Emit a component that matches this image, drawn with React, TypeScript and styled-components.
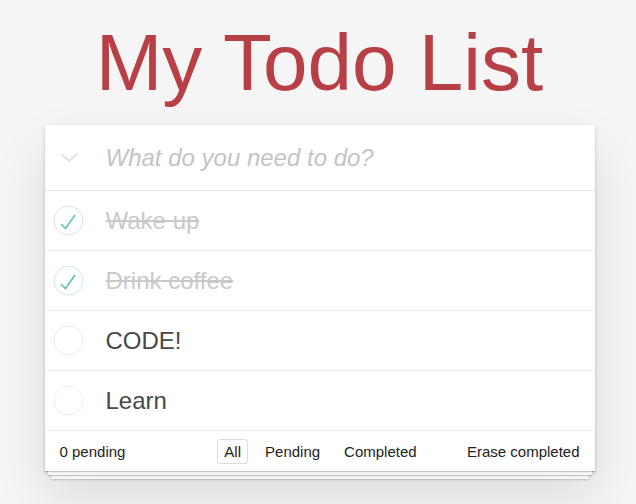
import React from "react";
import styled, { createGlobalStyle } from "styled-components";

const Global = createGlobalStyle`
  html, body {
    margin: 0;
    padding: 0;
    background: #f5f5f5;
    font-family: "Liberation Sans", Arial, sans-serif;
    color: #4d4d4d;
  }
`;

const Page = styled.div`
  padding: 23px 0 40px 3px;
  display: flex;
  flex-direction: column;
  align-items: center;
`;

const Title = styled.h1`
  margin: 0;
  font-size: 80px;
  line-height: 80px;
  font-weight: 400;
  color: #b83f45;
  text-align: center;
`;

const Card = styled.section`
  margin-top: 22px;
  width: 550px;
  background: #fff;
  box-shadow: 0 2px 4px rgba(0, 0, 0, 0.2), 0 25px 50px rgba(0, 0, 0, 0.1);
`;

const Header = styled.div`
  height: 65px;
  display: flex;
  align-items: center;
`;

const Toggle = styled.div`
  width: 61px;
  height: 65px;
  display: flex;
  align-items: center;
  justify-content: center;
  padding-right: 12px;
  box-sizing: border-box;
`;

const Placeholder = styled.div`
  font-size: 24px;
  font-style: italic;
  color: #c4c4c4;
`;

const List = styled.ul`
  list-style: none;
  margin: 0;
  padding: 0;
  border-top: 1px solid #e6e6e6;
`;

const Row = styled.li`
  height: 59px;
  display: flex;
  align-items: center;
  border-bottom: 1px solid #ededed;
`;

const CheckCell = styled.div`
  width: 61px;
  padding-left: 8px;
  box-sizing: border-box;
  display: flex;
  align-items: center;
`;

const Label = styled.span<{ $done: boolean }>`
  font-size: 24px;
  color: ${(p) => (p.$done ? "#c9c9c9" : "#484848")};
  text-decoration: ${(p) => (p.$done ? "line-through" : "none")};
`;

const Footer = styled.footer`
  height: 40px;
  padding: 0 15px;
  display: grid;
  grid-template-columns: 1fr auto 1fr;
  align-items: center;
  font-size: 15px;
  color: #222;
  background: #fff;
  box-shadow: 0 1px 1px rgba(0, 0, 0, 0.2), 0 7px 0 -3px #f6f6f6,
    0 8px 1px -3px rgba(0, 0, 0, 0.2), 0 14px 0 -6px #f6f6f6,
    0 15px 2px -6px rgba(0, 0, 0, 0.2);
`;

const Count = styled.span``;

const Filters = styled.div`
  display: flex;
  gap: 10px;
  margin-left: 2px;
`;

const Filter = styled.span<{ $active: boolean }>`
  padding: 3px 6px;
  border: 1px solid ${(p) => (p.$active ? "#dcdcdc" : "transparent")};
  border-radius: 3px;
  line-height: 17px;
`;

const Erase = styled.span`
  justify-self: end;
`;

const Chevron = () => (
  <svg width="20" height="12" viewBox="0 0 20 12">
    <path d="M2 2 L10 9 L18 2" fill="none" stroke="#e3e3e3" strokeWidth="2.2" />
  </svg>
);

const Check = ({ done }: { done: boolean }) => (
  <svg width="31" height="31" viewBox="0 0 31 31">
    <circle cx="15.5" cy="15.5" r="14.5" fill="none" stroke={done ? "#d2e8e3" : "#ededed"} strokeWidth="1" />
    {done && (
      <path d="M8 19 L12.5 23.5 L22 10" fill="none" stroke="#5dc2af" strokeWidth="1.5" />
    )}
  </svg>
);

const todos = [
  { text: "Wake up", done: true },
  { text: "Drink coffee", done: true },
  { text: "CODE!", done: false },
  { text: "Learn", done: false },
];

export default function App() {
  return (
    <>
      <Global />
      <Page>
        <Title>My Todo List</Title>
        <Card>
          <Header>
            <Toggle>
              <Chevron />
            </Toggle>
            <Placeholder>What do you need to do?</Placeholder>
          </Header>
          <List>
            {todos.map((t) => (
              <Row key={t.text}>
                <CheckCell>
                  <Check done={t.done} />
                </CheckCell>
                <Label $done={t.done}>{t.text}</Label>
              </Row>
            ))}
          </List>
          <Footer>
            <Count>0 pending</Count>
            <Filters>
              <Filter $active>All</Filter>
              <Filter $active={false}>Pending</Filter>
              <Filter $active={false}>Completed</Filter>
            </Filters>
            <Erase>Erase completed</Erase>
          </Footer>
        </Card>
      </Page>
    </>
  );
}
